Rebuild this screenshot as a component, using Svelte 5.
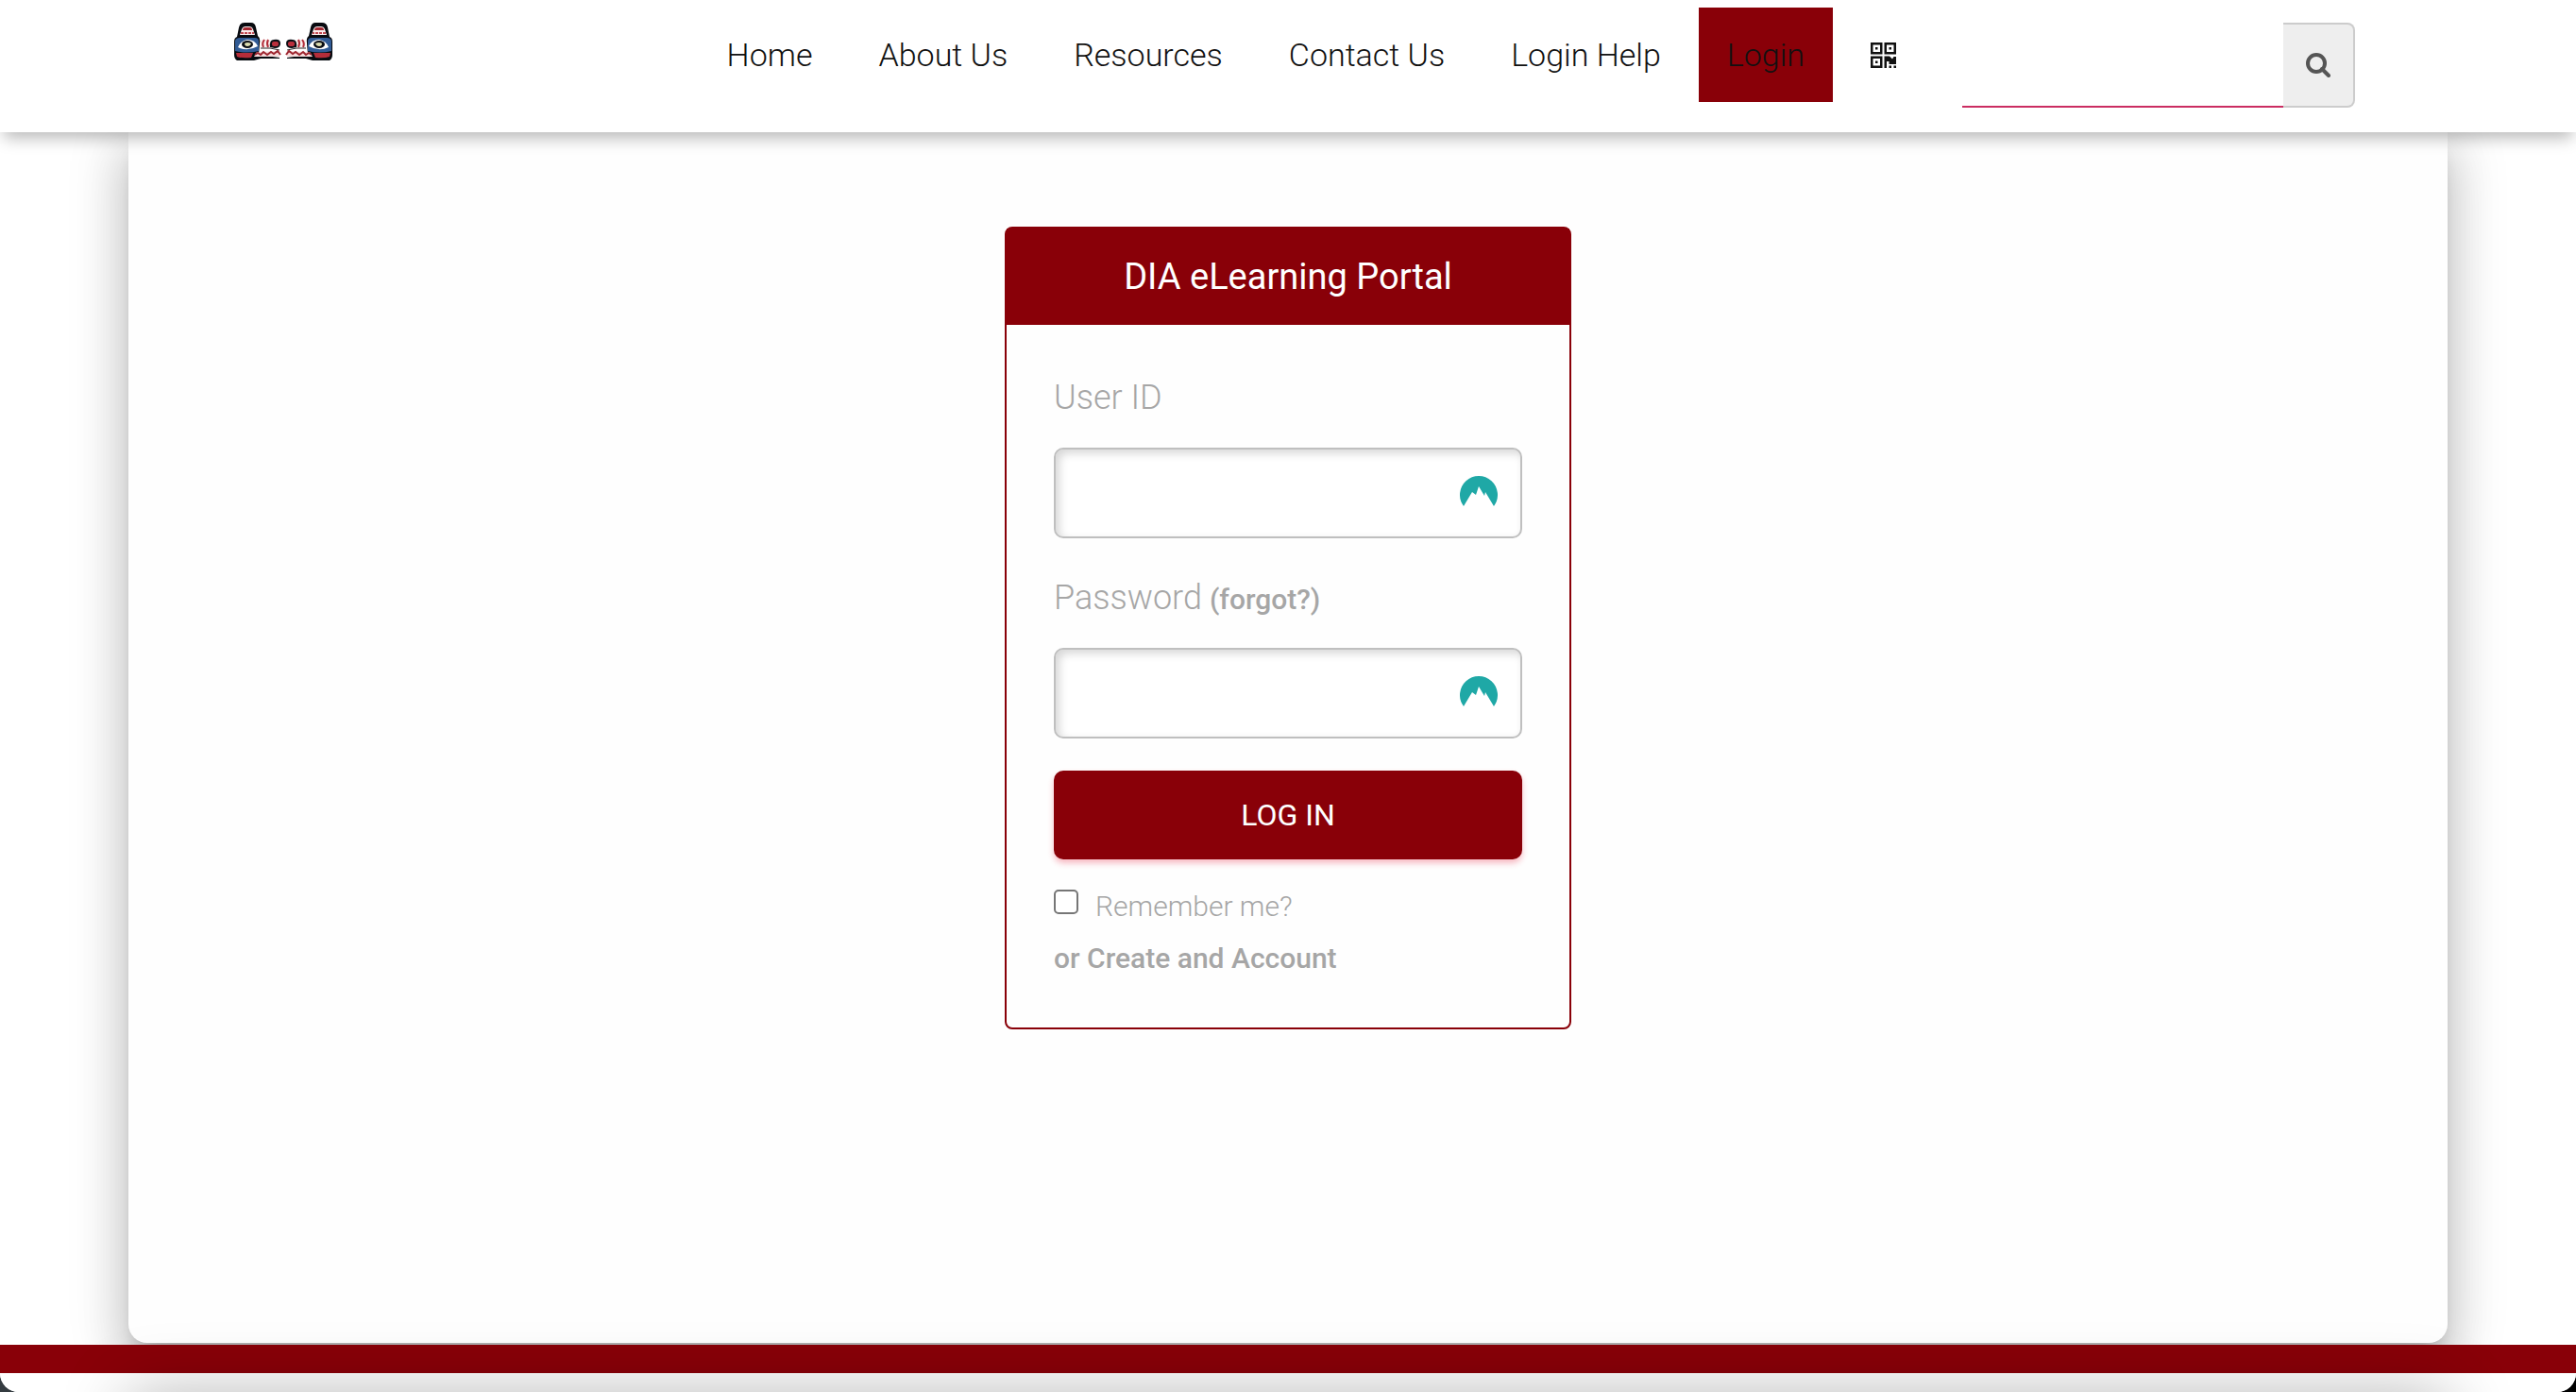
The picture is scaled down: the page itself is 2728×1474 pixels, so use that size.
<script>
	const links = [
		{ label: "Home", href: "#home" },
		{ label: "About Us", href: "#about" },
		{ label: "Resources", href: "#resources" },
		{ label: "Contact Us", href: "#contact" },
		{ label: "Login Help", href: "#help" },
		{ label: "Login", href: "#login", active: true },
	];

	let search = $state("");
	let userId = $state("");
	let password = $state("");
	let remember = $state(false);
</script>

{#snippet vaultIcon()}
	<svg class="vault-icon" viewBox="0 0 40 32" aria-hidden="true">
		<path
			d="M4 32A20 20 0 1 1 36 32L27 17L26 21L20 11L17 20L13 17Z"
			fill="#1fa8a6"
		/>
	</svg>
{/snippet}

{#snippet whale()}
	<path d="M3 40Q0 38 0 34V20Q0 16 3 15L5 5Q6 0 11 0H18Q22 0 23 5L25 14Q28 16 27 22L26 34L48 37V38H28L21 40Z" fill="#080b10" />
	<path d="M6 13L8 7Q9 4 12 4H16Q19 4 20 7L22 13Z" fill="#fbeeee" />
	<path d="M9 8Q9 5 12 5H16Q19 5 19 8Z" fill="#a52831" />
	<path d="M7 11H21" stroke="#c04a52" stroke-width="2" stroke-dasharray="3 1" />
	<path d="M1 19Q2 16 6 16H22Q26 16 26 20V30Q13 33 1 30Z" fill="#315b95" />
	<path d="M4 26Q7 19 14 18Q22 18 25 25Q14 31 4 26Z" fill="#fff" />
	<ellipse cx="14" cy="23" rx="6" ry="4" fill="#0b0e14" />
	<path d="M11 22Q14 20 18 22Q17 25 14 25Q11 25 11 22Z" fill="#dcdcb0" />
	<path d="M2 32H20L18 37Q8 38 3 36Z" fill="#b52d3a" />
	<path d="M28 18V28H39V18Z" fill="#fbf1ef" />
	<path d="M32 18Q29 22 31 26M36 18Q34 22 36 26" fill="none" stroke="#b12a36" stroke-width="2" />
	<path d="M28 27H38L48 29" fill="none" stroke="#333" />
	<path d="M38 26Q37 18 42 18Q49 17 49 22Q49 27 43 27Z" fill="#0b0e14" />
	<rect x="40" y="20" width="7" height="5" rx="2" fill="#b92f3c" />
	<path d="M21 36L24 31L48 30V36Z" fill="#f6dede" />
	<path d="M22 34L25 32L28 34L31 31L35 34L39 31L42 33L46 30L49 34" fill="none" stroke="#9e2630" stroke-width="2" />
{/snippet}

<div class="page">
	<header class="navbar">
		<a class="brand" href="#home" aria-label="DIA eLearning home">
			<svg viewBox="0 0 104 42" aria-hidden="true">
				{@render whale()}
				<g transform="matrix(-1 0 0 1 104 0)">{@render whale()}</g>
			</svg>
		</a>

		<nav>
			{#each links as link (link.label)}
				<a class="nav-link" class:active={link.active} href={link.href}>{link.label}</a>
			{/each}
			<a class="nav-link qr" href="#qr" aria-label="QR code">
				<svg viewBox="0 0 27 27" aria-hidden="true">
					<path
						fill="#111"
						fill-rule="evenodd"
						d="M0 0H12.5V12.5H0ZM2.5 2.5V10H10V2.5ZM5 5H7.5V7.5H5ZM14.5 0H27V12.5H14.5ZM17 2.5V10H24.5V2.5ZM19.5 5H22V7.5H19.5ZM0 14.5H12.5V27H0ZM2.5 17V24.5H10V17ZM5 19.5H7.5V22H5ZM14.5 14.5H20L23 17.5L24.5 15H27V23H19.5V20H17V27H14.5ZM19.5 24.5H22V27H19.5ZM24.5 24.5H27V27H24.5Z"
					/>
				</svg>
			</a>
		</nav>

		<form class="search" role="search" onsubmit={(e) => e.preventDefault()}>
			<input type="text" aria-label="Search" bind:value={search} />
			<button type="submit" aria-label="Search">
				<svg viewBox="0 0 26 26" aria-hidden="true">
					<circle cx="11" cy="11" r="9" />
					<path d="M17 17L24 24" />
				</svg>
			</button>
		</form>
	</header>

	<main class="panel">
		<section class="card">
			<h1>DIA eLearning Portal</h1>

			<form onsubmit={(e) => e.preventDefault()}>
				<div class="label-row">
					<label for="user-id">User ID</label>
				</div>
				<div class="field">
					<input id="user-id" type="text" bind:value={userId} />
					{@render vaultIcon()}
				</div>

				<div class="label-row">
					<label for="password">Password</label>
					<a href="#forgot">(forgot?)</a>
				</div>
				<div class="field">
					<input id="password" type="password" bind:value={password} />
					{@render vaultIcon()}
				</div>

				<button class="submit" type="submit">LOG IN</button>

				<div class="remember">
					<input id="remember" type="checkbox" bind:checked={remember} />
					<label for="remember">Remember me?</label>
				</div>
				<a class="create" href="#create">or Create and Account</a>
			</form>
		</section>
	</main>

	<footer></footer>
</div>

<style>
	:global(body) {
		background: linear-gradient(90deg, #343b40, #000);
	}

	.page,
	.page * {
		box-sizing: border-box;
	}

	.page {
		--brand-red: #890008;
		--muted: #a6a6a6;

		display: flex;
		flex-direction: column;
		min-height: 100vh;
		overflow: hidden;
		border-radius: 0 0 20px 20px;
		background: #fff;
		font-family: Roboto, sans-serif;
		font-weight: 300;
	}

	a {
		color: inherit;
		text-decoration: none;
	}

	svg {
		display: block;
	}

	.navbar {
		position: relative;
		z-index: 2;
		display: flex;
		align-items: flex-start;
		height: 140px;
		padding: 8px 234px 0 248px;
		background: #fff;
		box-shadow: 0 10px 16px -4px rgba(0, 0, 0, 0.28);
	}

	.brand {
		padding-top: 16px;
	}

	.brand svg {
		width: 104px;
		height: 42px;
	}

	nav {
		display: flex;
		gap: 10px;
		margin-left: auto;
	}

	.nav-link {
		height: 100px;
		padding: 0 30px;
		color: #111;
		font-size: 34px;
		line-height: 100px;
	}

	.nav-link.active {
		background: var(--brand-red);
	}

	.qr {
		display: flex;
		align-items: center;
	}

	.qr svg {
		width: 27px;
		height: 27px;
	}

	.search {
		display: flex;
		height: 90px;
		margin: 16px 0 0 40px;
	}

	.search input {
		width: 340px;
		padding: 0 16px;
		border: 0;
		border-bottom: 2px solid #cb2d62;
		background: transparent;
		font: inherit;
		font-size: 32px;
		outline: none;
	}

	.search button {
		display: flex;
		align-items: center;
		justify-content: center;
		width: 76px;
		padding: 0;
		border: 2px solid #ccc;
		border-left: 0;
		border-radius: 0 8px 8px 0;
		background: #eee;
	}

	.search svg {
		width: 26px;
		height: 26px;
		fill: none;
		stroke: #555;
		stroke-width: 4;
		stroke-linecap: round;
	}

	.panel {
		display: flex;
		flex: 1;
		align-items: flex-start;
		justify-content: center;
		margin: 0 136px 2px;
		padding: 100px 0;
		border-radius: 0 0 20px 20px;
		background: #fefefe;
		box-shadow:
			0 32px 48px 4px rgba(0, 0, 0, 0.14),
			0 12px 60px 10px rgba(0, 0, 0, 0.12),
			0 16px 20px -10px rgba(0, 0, 0, 0.2);
	}

	.card {
		width: 600px;
		border: 2px solid var(--brand-red);
		border-radius: 8px;
		color: var(--muted);
	}

	.card h1 {
		margin: 0;
		background: var(--brand-red);
		color: #fff;
		font-size: 38px;
		font-weight: 400;
		line-height: 102px;
		text-align: center;
	}

	.card form {
		display: flex;
		flex-direction: column;
		padding: 40px 50px 48px;
	}

	.label-row {
		display: flex;
		align-items: baseline;
		gap: 8px;
		height: 90px;
		font-size: 36px;
		line-height: 74px;
	}

	.label-row a {
		font-size: 30px;
		font-weight: 500;
	}

	.field {
		position: relative;
		margin-bottom: 26px;
	}

	.field input {
		display: block;
		width: 100%;
		height: 96px;
		padding: 0 80px 0 20px;
		border: 2px solid #bfbfbf;
		border-radius: 10px;
		background: #fff;
		box-shadow: inset 4px 4px 10px rgba(0, 0, 0, 0.16);
		font: inherit;
		font-size: 32px;
	}

	.vault-icon {
		position: absolute;
		top: 30px;
		right: 26px;
		width: 40px;
		height: 32px;
	}

	.submit {
		height: 94px;
		margin-top: 8px;
		border: 0;
		border-radius: 10px;
		background: var(--brand-red);
		box-shadow: 0 4px 6px rgba(233, 30, 60, 0.3);
		color: #fff;
		font: inherit;
		font-size: 32px;
		font-weight: 400;
	}

	.remember {
		display: flex;
		gap: 18px;
		margin-top: 20px;
		font-size: 30px;
		line-height: 60px;
	}

	.remember input {
		width: 26px;
		height: 26px;
		margin: 12px 0 0;
		appearance: none;
		border: 2px solid #767676;
		border-radius: 5px;
		background: #fff;
	}

	.remember input:checked {
		background: var(--brand-red);
	}

	.create {
		font-size: 30px;
		font-weight: 500;
		line-height: 50px;
	}

	footer {
		position: relative;
		height: 50px;
		border-top: 30px solid var(--brand-red);
		background: #fff;
	}

	/* soft shade rising from below the footer */
	footer::after {
		content: "";
		position: absolute;
		top: 100%;
		right: 136px;
		left: 136px;
		height: 100px;
		box-shadow: 0 0 70px rgba(0, 0, 0, 0.27);
	}
</style>
